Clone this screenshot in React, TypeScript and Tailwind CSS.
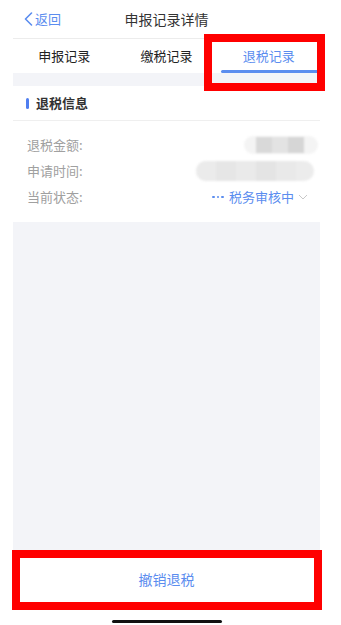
import React from 'react';

const rows = [
  { label: '退税金额:', kind: 'amount' },
  { label: '申请时间:', kind: 'time' },
  { label: '当前状态:', kind: 'status' },
];

function Blur({ kind }: { kind: string }) {
  if (kind === 'amount') {
    return (
      <div className="-mr-[10px] flex h-[18px] w-[74px] items-center overflow-hidden rounded-full bg-[#f4f4f4] blur-[1px]">
        <div className="ml-[12px] h-[16px] w-[16px] bg-[#d9d9d9]" />
        <div className="h-[16px] w-[16px] bg-[#e3e3e3]" />
        <div className="h-[16px] w-[16px] bg-[#d6d6d6]" />
      </div>
    );
  }
  return (
    <div className="-mr-[6px] flex h-[20px] w-[118px] overflow-hidden rounded-full bg-[#ececec] blur-[1px]">
      <div className="w-[20px] bg-[#ebebeb]" />
      <div className="w-[20px] bg-[#e6e6e6]" />
      <div className="w-[20px] bg-[#eaeaea]" />
      <div className="w-[20px] bg-[#e4e4e4]" />
      <div className="w-[20px] bg-[#e9e9e9]" />
    </div>
  );
}

export default function App() {
  return (
    <div
      className="relative h-[625px] w-[341px] overflow-hidden bg-white"
      style={{ fontFamily: '"Noto Sans CJK SC", "Noto Sans", sans-serif' }}
    >
      <div className="ml-[13px] flex h-full w-[307px] flex-col">
        {/* nav */}
        <div className="relative flex h-[39px] shrink-0 items-center justify-center border-b border-[#ececec] bg-white">
          <div className="absolute left-[11px] flex items-center text-[13px] text-[#5b8def]">
            <svg width="9" height="14" viewBox="0 0 9 14" fill="none" className="mr-[2px]">
              <path d="M7.5 1 1.5 7l6 6" stroke="#5b8def" strokeWidth="1.6" strokeLinecap="round" strokeLinejoin="round" />
            </svg>
            返回
          </div>
          <span className="text-[14px] text-[#333]">申报记录详情</span>
        </div>

        {/* tabs */}
        <div className="flex h-[34px] shrink-0 bg-white">
          <div className="flex flex-1 items-center justify-center text-[13px] text-[#222]">申报记录</div>
          <div className="flex flex-1 items-center justify-center text-[13px] text-[#222]">缴税记录</div>
          <div className="relative flex flex-1 items-center justify-center text-[13px] text-[#5b8def]">
            退税记录
            <div className="absolute bottom-0 left-[3px] right-0 h-[3px] rounded-full bg-[#5b8def]" />
          </div>
        </div>

        <div className="h-[13px] shrink-0 bg-[#f3f4f8]" />

        {/* section */}
        <div className="flex h-[35px] shrink-0 items-center border-b border-[#efefef] bg-white pl-[13px]">
          <div className="mr-[7px] h-[11px] w-[3px] rounded-full bg-[#4f7ef0]" />
          <span className="text-[13px] font-bold text-[#333]">退税信息</span>
        </div>

        <div className="flex shrink-0 flex-col bg-white pb-[12px] pt-[11px]">
          {rows.map((r) => (
            <div key={r.label} className="flex h-[26px] items-center justify-between pl-[14px] pr-[12px]">
              <span className="text-[13px] text-[#a0a0a0]">{r.label}</span>
              {r.kind === 'status' ? (
                <span className="flex items-center text-[13px] text-[#5b8def]">
                  <span className="mr-[5px] flex gap-[2px]">
                    <span className="h-[2.5px] w-[2.5px] rounded-full bg-[#5b8def]" />
                    <span className="h-[2.5px] w-[2.5px] rounded-full bg-[#5b8def]" />
                    <span className="h-[2.5px] w-[2.5px] rounded-full bg-[#5b8def]" />
                  </span>
                  税务审核中
                  <svg width="10" height="6" viewBox="0 0 10 6" fill="none" className="ml-[4px]">
                    <path d="M1 1l4 4 4-4" stroke="#c8c8c8" strokeWidth="1" />
                  </svg>
                </span>
              ) : (
                <Blur kind={r.kind} />
              )}
            </div>
          ))}
        </div>

        <div className="flex-1 bg-[#f3f4f8]" />

        {/* bottom button */}
        <div className="flex h-[46px] shrink-0 items-center justify-center border-t-2 border-[#e6e6e6] bg-white text-[14px] text-[#5b8def]">
          撤销退税
        </div>
        <div className="flex h-[24px] shrink-0 items-end justify-center bg-white pb-[2px]">
          <div className="h-[3px] w-[110px] rounded-full bg-[#111]" />
        </div>
      </div>

      {/* annotations */}
      <div className="pointer-events-none absolute left-[204px] top-[34px] h-[57px] w-[121px] border-[8px] border-[#ff0000]" />
      <div className="pointer-events-none absolute left-[12px] top-[550px] h-[60px] w-[310px] border-[8px] border-[#ff0000]" />
    </div>
  );
}
